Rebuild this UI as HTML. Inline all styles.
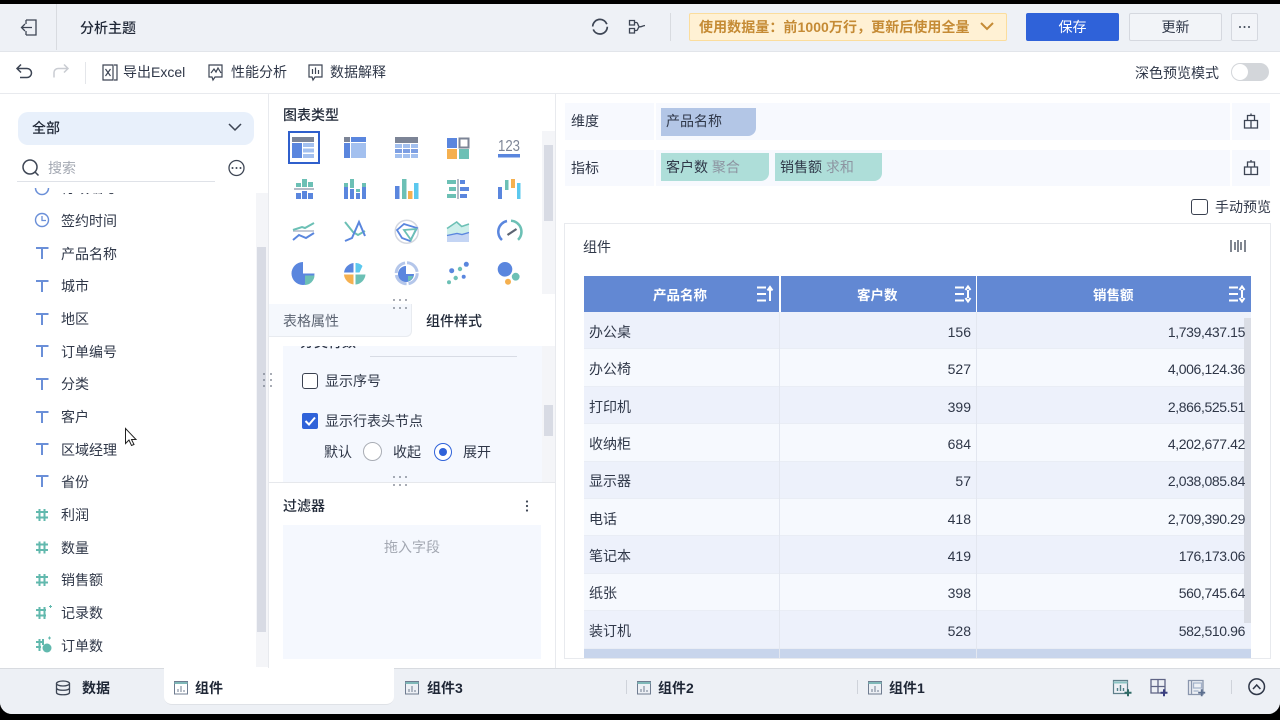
<!DOCTYPE html>
<html><head><meta charset="utf-8"><style>
*{box-sizing:border-box}
html,body{margin:0;padding:0}
body{width:1280px;height:720px;overflow:hidden;position:relative;background:#000;font:14px/20px "Liberation Sans","Noto Sans CJK SC",sans-serif;color:#2f3748}
.a{position:absolute}
.t{position:absolute;white-space:nowrap;height:20px;line-height:20px}
.b{font-weight:700}
.g{color:#8d94a1}
.r{text-align:right}
.row{position:absolute;left:584px;width:667px;height:37.4px;border-bottom:1px solid #e9edf5}
.c{position:absolute;top:0;bottom:0;width:1px;background:#e3e7f0}
svg{position:absolute;left:0;top:0;pointer-events:none}
</style></head><body>
<div class="a" style="left:0;top:4px;width:1280px;height:710px;background:#fff;border-radius:0 0 12px 12px;overflow:hidden">
<div class="a" style="left:0;top:0;width:1280px;height:48px;background:#eef1f6;border-bottom:1px solid #e2e5ea"></div>
<div class="a" style="left:0;top:89px;width:1280px;height:1px;background:#e8eaee"></div>
<div class="a" style="left:0;top:664px;width:1280px;height:46px;background:#edf0f5;border-top:1px solid #d8dbe0"></div>
</div>
<div class="a" style="left:56px;top:4px;width:1px;height:46px;background:#d8dbe0"></div>
<div class="t b" style="left:80px;top:18px;color:#1f2736;font-weight:500">分析主题</div>
<div class="a" style="left:670px;top:13px;width:1px;height:28px;background:#d8dbe0"></div>
<div class="a" style="left:689px;top:13px;width:318px;height:28px;background:#fff1d4;border:1px solid #fbdd9d;border-radius:2px"></div>
<div class="t b" style="left:699px;top:17px;color:#c58b35;letter-spacing:.07px;font-size:14px">使用数据量：前1000万行，更新后使用全量</div>
<div class="a" style="left:1026px;top:13px;width:93px;height:28px;background:#2f62d9;border-radius:2px;color:#fff;text-align:center;line-height:28px">保存</div>
<div class="a" style="left:1129px;top:13px;width:93px;height:28px;background:#f2f4f8;border:1px solid #d5d8df;border-radius:2px;text-align:center;line-height:26px">更新</div>
<div class="a" style="left:1231px;top:13px;width:27px;height:28px;background:#f2f4f8;border:1px solid #d5d8df;border-radius:2px"></div>
<div class="a" style="left:85px;top:62px;width:1px;height:22px;background:#e4e6ea"></div>
<div class="t" style="left:123px;top:62px">导出Excel</div>
<div class="t" style="left:231px;top:62px">性能分析</div>
<div class="t" style="left:330px;top:62px">数据解释</div>
<div class="t" style="left:1135px;top:63px">深色预览模式</div>
<div class="a" style="left:1231px;top:63px;width:38px;height:18px;border-radius:9px;background:#d3d6da"></div>
<div class="a" style="left:1232px;top:64px;width:16px;height:16px;border-radius:8px;background:#fff"></div>
<div class="a" style="left:268px;top:94px;width:1px;height:574px;background:#e8eaee"></div>
<div class="a" style="left:555px;top:94px;width:1px;height:574px;background:#e8eaee"></div>
<div class="a" style="left:18px;top:112px;width:236px;height:33px;background:#e8f0fb;border-radius:10px"></div>
<div class="t b" style="left:32px;top:118px;color:#1f2736;font-weight:500">全部</div>
<div class="t g" style="left:48px;top:158px;color:#a3a8b2">搜索</div>
<div class="a" style="left:17px;top:181px;width:198px;height:1px;background:#dfe2e8"></div>
<div class="a" style="left:0;top:193px;width:250px;height:470px;overflow:hidden">
<div class="t" style="left:61px;top:-15px">行政编号</div>
<div class="t" style="left:61px;top:18px">签约时间</div>
<div class="t" style="left:61px;top:50.5px">产品名称</div>
<div class="t" style="left:61px;top:83px">城市</div>
<div class="t" style="left:61px;top:116px">地区</div>
<div class="t" style="left:61px;top:148.5px">订单编号</div>
<div class="t" style="left:61px;top:181px">分类</div>
<div class="t" style="left:61px;top:214px">客户</div>
<div class="t" style="left:61px;top:246.5px">区域经理</div>
<div class="t" style="left:61px;top:279px">省份</div>
<div class="t" style="left:61px;top:312px">利润</div>
<div class="t" style="left:61px;top:344.5px">数量</div>
<div class="t" style="left:61px;top:377px">销售额</div>
<div class="t" style="left:61px;top:410px">记录数</div>
<div class="t" style="left:61px;top:442.5px">订单数</div>
</div>
<div class="a" style="left:256px;top:193px;width:12px;height:474px;background:#f4f5f8"></div>
<div class="a" style="left:257px;top:247px;width:9px;height:385px;background:#d8dbe4"></div>
<div class="t b" style="left:283px;top:105px;color:#1f2736;font-weight:500">图表类型</div>
<div class="a" style="left:288px;top:131px;width:32px;height:33px;border:2px solid #2f5fcc"></div>
<div class="a" style="left:542px;top:131px;width:13px;height:163px;background:#f4f5f8"></div>
<div class="a" style="left:544px;top:145px;width:9px;height:76px;background:#d8dbe4"></div>
<div class="a" style="left:269px;top:304px;width:143px;height:33px;background:#f5f8fd;border-right:1px solid #e8ebf0;border-bottom:1px solid #e8ebf0;border-radius:0 0 6px 0"></div>
<div class="t" style="left:283px;top:311px;color:#5c6472">表格属性</div>
<div class="t b" style="left:426px;top:311px;color:#1f2736;font-weight:500">组件样式</div>
<div class="a" style="left:283px;top:346px;width:259px;height:136px;background:#f5f8fe;overflow:hidden">
<div class="t" style="left:17px;top:-14px;font-weight:500">分类行数</div>
<div class="a" style="left:87px;top:10px;width:147px;height:1px;background:#d8dce5"></div>
<div class="t" style="left:42px;top:25px">显示序号</div>
<div class="t" style="left:42px;top:65px">显示行表头节点</div>
<div class="t" style="left:41px;top:96px">默认</div>
<div class="t" style="left:110px;top:96px">收起</div>
<div class="t" style="left:180px;top:96px">展开</div>
</div>
<div class="a" style="left:542px;top:346px;width:13px;height:136px;background:#f4f5f8"></div>
<div class="a" style="left:544px;top:405px;width:9px;height:31px;background:#d8dbe4"></div>
<div class="a" style="left:302px;top:373px;width:16px;height:16px;border:1.5px solid #3a4150;border-radius:3px;background:#fff"></div>
<div class="a" style="left:302px;top:413px;width:16px;height:16px;border-radius:2px;background:#2f62d9"></div>
<div class="a" style="left:363px;top:442px;width:19px;height:19px;border:1px solid #a9adb5;border-radius:50%;background:#fff"></div>
<div class="a" style="left:434px;top:443px;width:18px;height:18px;border:1px solid #2f62d9;border-radius:50%;background:#fff"></div>
<div class="a" style="left:439px;top:448px;width:8px;height:8px;border-radius:50%;background:#2f62d9"></div>
<div class="a" style="left:269px;top:482px;width:286px;height:1px;background:#e6e8ec"></div>
<div class="t b" style="left:283px;top:496px;color:#1f2736;font-weight:500">过滤器</div>
<div class="a" style="left:283px;top:525px;width:258px;height:134px;background:#f5f8fe"></div>
<div class="t" style="left:384px;top:537px;color:#a3a8b2">拖入字段</div>
<div class="a" style="left:565px;top:103px;width:705px;height:37px;background:#f7f9fe"></div>
<div class="a" style="left:565px;top:150px;width:705px;height:36px;background:#f7f9fe"></div>
<div class="a" style="left:654px;top:103px;width:2px;height:37px;background:#fff"></div>
<div class="a" style="left:654px;top:150px;width:2px;height:36px;background:#fff"></div>
<div class="a" style="left:1230px;top:103px;width:2px;height:37px;background:#fff"></div>
<div class="a" style="left:1230px;top:150px;width:2px;height:36px;background:#fff"></div>
<div class="t" style="left:571px;top:111px">维度</div>
<div class="t" style="left:571px;top:158px">指标</div>
<div class="a" style="left:661px;top:108px;width:95px;height:28px;background:#b3c6e6;border-radius:0 0 8px 0"></div>
<div class="t" style="left:666px;top:111px">产品名称</div>
<div class="a" style="left:661px;top:153px;width:108px;height:28px;background:#aeded9;border-radius:0 0 8px 0"></div>
<div class="t" style="left:666px;top:157px">客户数 <span class="g">聚合</span></div>
<div class="a" style="left:775px;top:153px;width:107px;height:28px;background:#aeded9;border-radius:0 0 8px 0"></div>
<div class="t" style="left:780px;top:157px">销售额 <span class="g">求和</span></div>
<div class="a" style="left:1191px;top:199px;width:17px;height:16px;border:1.5px solid #3a4150;border-radius:3px"></div>
<div class="t" style="left:1215px;top:197px">手动预览</div>
<div class="a" style="left:564px;top:223px;width:707px;height:436px;border:1px solid #e8eaee"></div>
<div class="t" style="left:583px;top:237px">组件</div>
<div class="a" style="left:584px;top:276px;width:667px;height:36px;background:#6288d3"></div>
<div class="a" style="left:779px;top:276px;width:2px;height:36px;background:#fff"></div>
<div class="a" style="left:976px;top:276px;width:1px;height:36px;background:#fff"></div>
<div class="t b" style="left:653px;top:286px;color:#fff;font-size:13.5px">产品名称</div>
<div class="t b" style="left:857px;top:286px;color:#fff;font-size:13.5px">客户数</div>
<div class="t b" style="left:1093px;top:286px;color:#fff;font-size:13.5px">销售额</div>
<div class="row" style="top:312px;background:#edf1fb"></div>
<div class="row" style="top:349.4px;background:#f6f9fe"></div>
<div class="row" style="top:386.8px;background:#edf1fb"></div>
<div class="row" style="top:424.2px;background:#f6f9fe"></div>
<div class="row" style="top:461.6px;background:#edf1fb"></div>
<div class="row" style="top:499px;background:#f6f9fe"></div>
<div class="row" style="top:536.4px;background:#edf1fb"></div>
<div class="row" style="top:573.8px;background:#f6f9fe"></div>
<div class="row" style="top:611.2px;background:#edf1fb"></div>
<div class="a" style="left:584px;top:649px;width:667px;height:9px;background:#c8d5ec"></div>
<div class="c" style="left:779px;top:312px;bottom:62px"></div>
<div class="c" style="left:976px;top:312px;bottom:62px"></div>
<div class="a" style="left:1244px;top:318px;width:7px;height:305px;background:#dadde5"></div>
<div class="t" style="left:589px;top:322px">办公桌</div><div class="t r" style="right:309px;top:322px">156</div><div class="t r" style="right:35px;top:322px;letter-spacing:-.38px">1,739,437.15</div>
<div class="t" style="left:589px;top:359px">办公椅</div><div class="t r" style="right:309px;top:359px">527</div><div class="t r" style="right:35px;top:359px;letter-spacing:-.38px">4,006,124.36</div>
<div class="t" style="left:589px;top:397px">打印机</div><div class="t r" style="right:309px;top:397px">399</div><div class="t r" style="right:35px;top:397px;letter-spacing:-.38px">2,866,525.51</div>
<div class="t" style="left:589px;top:434px">收纳柜</div><div class="t r" style="right:309px;top:434px">684</div><div class="t r" style="right:35px;top:434px;letter-spacing:-.38px">4,202,677.42</div>
<div class="t" style="left:589px;top:471px">显示器</div><div class="t r" style="right:309px;top:471px">57</div><div class="t r" style="right:35px;top:471px;letter-spacing:-.38px">2,038,085.84</div>
<div class="t" style="left:589px;top:509px">电话</div><div class="t r" style="right:309px;top:509px">418</div><div class="t r" style="right:35px;top:509px;letter-spacing:-.38px">2,709,390.29</div>
<div class="t" style="left:589px;top:546px">笔记本</div><div class="t r" style="right:309px;top:546px">419</div><div class="t r" style="right:35px;top:546px;letter-spacing:-.38px">176,173.06</div>
<div class="t" style="left:589px;top:583px">纸张</div><div class="t r" style="right:309px;top:583px">398</div><div class="t r" style="right:35px;top:583px;letter-spacing:-.38px">560,745.64</div>
<div class="t" style="left:589px;top:621px">装订机</div><div class="t r" style="right:309px;top:621px">528</div><div class="t r" style="right:35px;top:621px;letter-spacing:-.38px">582,510.96</div>
<div class="a" style="left:164px;top:668px;width:230px;height:37px;background:#fff;border-bottom:1px solid #dfe2e7;border-radius:0 0 8px 8px"></div>
<div class="t b" style="left:82px;top:678px;color:#1f2736">数据</div>
<div class="t b" style="left:195px;top:678px;color:#1f2736">组件</div>
<div class="t b" style="left:427px;top:678px;color:#1f2736">组件3</div>
<div class="t b" style="left:658px;top:678px;color:#1f2736">组件2</div>
<div class="t b" style="left:889px;top:678px;color:#1f2736">组件1</div>
<div class="a" style="left:626px;top:680px;width:1px;height:14px;background:#cfd3da"></div>
<div class="a" style="left:857px;top:680px;width:1px;height:14px;background:#cfd3da"></div>
<div class="a" style="left:1231px;top:680px;width:1px;height:14px;background:#cfd3da"></div>
<svg width="1280" height="720" viewBox="0 0 1280 720" fill="none">
<g stroke="#3d4554" stroke-width="1.3">
<path d="M26 20h10v15H26M26 20v4M26 31v4M32 27.500H21.500M25 24l-3.500 3.500 3.500 3.500"/>
<circle cx="600" cy="26.700" r="7.300" stroke-width="1.700" stroke-dasharray="20 3 20 3"/>
<path d="M629.500 20.500h5v4.500h-5zM629.500 28.500h5v4.500h-5zM634.500 22.500h2c1.500 0 1.500 4 3 4.300 2 .3 3-1 5.500-1.300M634.500 30.500h2c1.500 0 1.500-3.700 3-3.700"/>
<path d="M18 68.500h9a4.500 4.500 0 0 1 0 9h-7M21 64.500l-4 4 4 4" stroke-width="1.500"/>
<path d="M67 68.500h-9a4 4 0 0 0-4 4v5M64 64.500l4 4-4 4" stroke="#c9ccd2" stroke-width="1.500"/>
<path d="M103 65h10v15h-10zM105.500 69l5 7M110.500 69l-5 7M114 65h3v15h-3" stroke-width="1.200"/>
<path d="M209 65h13v12h-7l-2 3-1-3h-3zM211 73l3-4 2 3 2-4 3 5" stroke-width="1.200"/>
<path d="M309 65h13v12h-7l-2 3-1-3h-3zM312.500 69v5M315.500 67.500v6.500M318.500 70v4" stroke-width="1.200"/>
<circle cx="30" cy="167" r="7" stroke-width="1.500"/><path d="M35 172l3.500 3.500" stroke-width="1.500"/>
<circle cx="236.500" cy="168" r="7.500"/>
<path d="M1244.500 120.500h13v7.500h-13zM1247.500 120.500v-5h7v5M1251 115.500v-2M1251 120.500v7.500"/>
<path d="M1244.500 167h13v7.500h-13zM1247.500 167v-5h7v5M1251 162v-2M1251 167v7.500"/>
<path d="M1231 240v12M1245 240v12M1235 242v8M1238 240v12M1241 242v8"/>
</g>
<path d="M981 23l6 6 6-6" stroke="#c58b35" stroke-width="2"/>
<path d="M229 124l6 6 6-6" stroke="#3d4554" stroke-width="1.500"/>
<g fill="#3d4554"><circle cx="232.500" cy="168" r="1"/><circle cx="236.500" cy="168" r="1"/><circle cx="240.500" cy="168" r="1"/>
<circle cx="1240" cy="27" r="1"/><circle cx="1244.500" cy="27" r="1"/><circle cx="1249" cy="27" r="1"/>
<circle cx="527" cy="501.500" r="1.100"/><circle cx="527" cy="506" r="1.100"/><circle cx="527" cy="510.500" r="1.100"/></g>
<g fill="#6b7280"><circle cx="394" cy="300" r=".9"/><circle cx="400" cy="300" r=".9"/><circle cx="406" cy="300" r=".9"/><circle cx="394" cy="308" r=".9"/><circle cx="400" cy="308" r=".9"/><circle cx="406" cy="308" r=".9"/>
<circle cx="394" cy="477" r=".9"/><circle cx="400" cy="477" r=".9"/><circle cx="406" cy="477" r=".9"/><circle cx="394" cy="485" r=".9"/><circle cx="400" cy="485" r=".9"/><circle cx="406" cy="485" r=".9"/>
<circle cx="264" cy="374" r=".9"/><circle cx="264" cy="380" r=".9"/><circle cx="264" cy="386" r=".9"/><circle cx="271" cy="374" r=".9"/><circle cx="271" cy="380" r=".9"/><circle cx="271" cy="386" r=".9"/></g>
<path d="M305.500 421l3.500 3.500 6-7" stroke="#fff" stroke-width="2"/>
<path d="M35.500 188a6.500 6.500 0 0 0 13 0" stroke="#6a8fd8" stroke-width="1.500"/>
<circle cx="42" cy="220" r="6.500" stroke="#6a8fd8" stroke-width="1.400"/><path d="M42 216v4.500h4" stroke="#6a8fd8" stroke-width="1.300"/>
<g stroke="#6a8fd8" stroke-width="2">
<path d="M36 248h12.500M42 248v11M36 281h12.500M42 281v11M36 314h12.500M42 314v11M36 346h12.500M42 346v11M36 379h12.500M42 379v11M36 412h12.500M42 412v11M36 444h12.500M42 444v11M36 476h12.500M42 476v11"/></g>
<g stroke="#62b9ae" stroke-width="2">
<path d="M36 512h12M36 517.500h12M39.500 509v12M44.500 509v12M36 544.500h12M36 550h12M39.500 541.500v12M44.500 541.500v12M36 577h12M36 582.500h12M39.500 574v12M44.500 574v12M36 610h10M36 615.500h10M39.500 607v12M44.500 607v12M36 642h7M36 647h5M39.500 639v12M43 639v6"/></g>
<circle cx="47" cy="648" r="4.500" fill="#62b9ae"/><path d="M49 606.500h3M50.500 605v3M48 638h3M49.500 636.500v3" stroke="#62b9ae"/>
<g fill="#5a86de">
<rect x="292" y="137" width="22" height="5" fill="#7c8496"/><rect x="292" y="143" width="10" height="15"/><rect x="303" y="143" width="11" height="4" fill="#a3c0ef"/><rect x="303" y="148.500" width="11" height="4" fill="#a3c0ef"/><rect x="303" y="154" width="11" height="4" fill="#a3c0ef"/>
<rect x="344" y="137" width="6" height="5" fill="#7c8496"/><rect x="351" y="137" width="15" height="5"/><rect x="344" y="143" width="6" height="15"/><rect x="351" y="143" width="15" height="15" fill="#a3c0ef"/>
<rect x="395" y="137" width="23" height="6" fill="#7c8496"/><g fill="#a3c0ef"><rect x="395" y="144" width="7" height="4"/><rect x="403" y="144" width="7" height="4"/><rect x="411" y="144" width="7" height="4"/><rect x="395" y="149" width="7" height="4" fill="#7d9fe3"/><rect x="403" y="149" width="7" height="4" fill="#7d9fe3"/><rect x="411" y="149" width="7" height="4" fill="#7d9fe3"/><rect x="395" y="154" width="7" height="4"/><rect x="403" y="154" width="7" height="4"/><rect x="411" y="154" width="7" height="4"/></g>
<rect x="447" y="138" width="10" height="10"/><rect x="459.500" y="138.500" width="9" height="9" fill="none" stroke="#7c8496" stroke-width="2"/><rect x="447" y="149" width="10" height="10" fill="#f5b04f"/><rect x="459" y="149" width="10" height="10" fill="#6cc0b5"/>
<rect x="498" y="154" width="22" height="3.500"/>
<rect x="294" y="188" width="20" height="2" fill="#b4bac6"/>
<rect x="296" y="183" width="5" height="4" fill="#6cc0b5"/><rect x="302" y="179" width="5" height="8" fill="#6cc0b5"/><rect x="308" y="182" width="5" height="5" fill="#6cc0b5"/><rect x="296" y="193" width="5" height="6"/><rect x="302" y="191" width="5" height="8"/><rect x="308" y="193" width="5" height="6"/>
<rect x="344" y="187" width="4" height="12"/><rect x="344" y="183" width="4" height="4" fill="#6cc0b5"/><rect x="350" y="189" width="4" height="10"/><rect x="350" y="179" width="4" height="9" fill="#6cc0b5"/><rect x="356" y="193" width="4" height="6"/><rect x="356" y="189" width="4" height="3" fill="#6cc0b5"/><rect x="362" y="187" width="4" height="12"/><rect x="362" y="183" width="4" height="4" fill="#6cc0b5"/>
<rect x="395" y="186" width="4.500" height="13"/><rect x="402" y="179" width="4.500" height="20" fill="#6cc0b5"/><rect x="408" y="191" width="4.500" height="8" fill="#f5b04f"/><rect x="414" y="183" width="4.500" height="16" fill="#5bc8ee"/>
<rect x="447" y="180" width="9" height="4" fill="#6cc0b5"/><rect x="460" y="180" width="5" height="4"/><rect x="449" y="187" width="7" height="4" fill="#6cc0b5"/><rect x="460" y="187" width="9" height="4"/><rect x="447" y="194" width="9" height="4" fill="#6cc0b5"/><rect x="460" y="194" width="7" height="4"/><rect x="457" y="179" width="2" height="20" fill="#b4bac6"/>
<rect x="498" y="187" width="4" height="12"/><rect x="505" y="180" width="3.500" height="10" fill="#6cc0b5"/><rect x="511" y="179" width="4" height="9" fill="#f5b04f"/><rect x="517" y="183" width="3.500" height="16" fill="#5bc8ee"/>
</g>
<g stroke-width="2" fill="none">
<path d="M293 231h21" stroke="#c4cad6" stroke-width="2"/>
<path d="M293 230l9-3 3 1 9-5" stroke="#6cc0b5"/><path d="M293 240l6-5 7 3 8-5" stroke="#5a86de"/>
<path d="M345 222l8 10 5 3 7-4" stroke="#6cc0b5"/><path d="M345 241l7-3 7-16 6 14" stroke="#5a86de"/>
<circle cx="406.700" cy="231.700" r="11.500" stroke="#d3d7e0" stroke-width="1.500"/><path d="M397 230l7-6 13 4-7 13-8-3z" stroke="#5a86de" stroke-width="1.800"/><path d="M404 230l12-1-5 11z" stroke="#6cc0b5" stroke-width="1.800"/>
<path d="M447 229l10-6 5 4 7-3v8l-7 2-5-1-10 2z" fill="#cdeeea" stroke="none"/><path d="M447 236l10-2 5 1 7-2v9h-22z" fill="#c4d5f4" stroke="none"/><path d="M447 228.500l9.700-6.500 5 4.500 7.300-2.500" stroke="#6cc0b5" stroke-width="1.600"/><path d="M447 235.500l10-2 5 1 7-2" stroke="#5a86de" stroke-width="1.400"/>
<path d="M502 240a11 11 0 0 1 5-19" stroke="#5a86de" stroke-width="2.500"/><path d="M511 220.800a11 11 0 0 1 7 19" stroke="#6cc0b5" stroke-width="2.500"/><path d="M507.500 235l9-6" stroke="#5c6472" stroke-width="2.200"/>
<circle cx="406.700" cy="273.300" r="10.500" stroke="#b4c6ea" stroke-width="3" stroke-dasharray="14.500 2"/>
</g>
<path d="M303 262a11.500 11.500 0 1 0 11.500 11.500H303z" fill="#5a86de"/><path d="M305 275.500h9.500a10 10 0 0 1-9.500 9.500z" fill="#6cc0b5"/>
<path d="M353.500 263a11 11 0 0 0-9.500 9.500h9.500z" fill="#5a86de"/><path d="M355.500 263c3 0 5 1 7 3l-3 6.500h-4z" fill="#5bc8ee"/><path d="M344 274.500h9.500v10a11 11 0 0 1-9.500-10z" fill="#f5b04f"/><path d="M355.500 274.500h10a11 11 0 0 1-10 10z" fill="#6cc0b5"/>
<path d="M406 266a8 8 0 1 0 8 8h-8z" fill="#5a86de"/><path d="M408 276h5a6 6 0 0 1-5 5z" fill="#6cc0b5"/>
<g fill="#5a86de"><circle cx="451.700" cy="270.700" r="2.500"/><circle cx="466.300" cy="264.300" r="2.500"/><circle cx="463.700" cy="276.700" r="2"/></g><g fill="#6cc0b5"><circle cx="460" cy="269" r="2.200"/><circle cx="455.700" cy="278" r="2.200"/><circle cx="449" cy="282.300" r="2"/></g>
<circle cx="505" cy="269.300" r="7.300" fill="#5a86de"/><circle cx="515.700" cy="276.700" r="3.900" fill="#6cc0b5"/><circle cx="508" cy="281.700" r="3" fill="#f5b04f"/>
<text x="498" y="151" font-family="Liberation Sans" font-size="16" fill="#7c8496" textLength="22" lengthAdjust="spacingAndGlyphs">123</text>
<g stroke="#fff"><path d="M757 287.500h9M757 294h9M757 300.500h9M770 301v-13M767.500 290.500l2.500-3.500 2.500 3.500" stroke-width="2"/>
<path d="M955 287.500h9M955 294h9M955 300.500h9M968 290v8M965.500 290l2.500-3.500 2.500 3.500M965.500 298l2.500 3.500 2.500-3.500" stroke-width="2"/>
<path d="M1229 287.500h9M1229 294h9M1229 300.500h9M1242 290v8M1239.500 290l2.500-3.500 2.500 3.500M1239.500 298l2.500 3.500 2.500-3.500" stroke-width="2"/></g>
<path d="M125.500 428.500v15l3.500-3.500 2.500 5.500 2.500-1-2.500-5h4.500z" fill="#fff" stroke="#222" stroke-width="1"/>
<g stroke="#3d4554" stroke-width="1.300"><ellipse cx="63" cy="683.500" rx="6.500" ry="2.500"/><path d="M56.500 683.500v9c0 3 13 3 13 0v-9M56.500 688c0 3 13 3 13 0"/></g>
<g stroke="#6f7c90"><path d="M174.500 681.500h13v12.500h-13z"/><path d="M174.500 683h13" stroke="#7fb8b8" stroke-width="2"/><path d="M178 692v-3M181 692v-6M184 692v-2"/>
<path d="M405.500 681.500h13v12.500h-13z"/><path d="M405.500 683h13" stroke="#7fb8b8" stroke-width="2"/><path d="M409 692v-3M412 692v-6M415 692v-2"/>
<path d="M637.500 681.500h13v12.500h-13z"/><path d="M637.500 683h13" stroke="#7fb8b8" stroke-width="2"/><path d="M641 692v-3M644 692v-6M647 692v-2"/>
<path d="M868.500 681.500h13v12.500h-13z"/><path d="M868.500 683h13" stroke="#7fb8b8" stroke-width="2"/><path d="M872 692v-3M875 692v-6M878 692v-2"/></g>
<path d="M1113.500 680.500h14v13h-14z" stroke="#5e7f8a" stroke-width="1.200"/><path d="M1113.500 682.500h14" stroke="#8cc4c4" stroke-width="2"/><path d="M1117.500 691v-3M1120.500 691v-6M1123.500 691v-3" stroke="#4f7f88" stroke-width="1.400"/><path d="M1124.500 692.700h7M1128 689.200v7" stroke="#2f6b66" stroke-width="2"/>
<path d="M1151 679.500h14v13.500h-14zM1158 679.500v13.500M1151 686.500h14" stroke="#5f6485" stroke-width="1.300"/><path d="M1160.500 692.700h7M1164 689.200v7" stroke="#3a3f80" stroke-width="2"/>
<path d="M1188.500 680.500h14.500v14h-14.500zM1191.500 680.500v14" stroke="#8a96ad" stroke-width="1.300"/><path d="M1193.500 683h8v5h-8zM1193.500 691h5" stroke="#a4b2ca" stroke-width="1.300"/><path d="M1198.200 692.700h7M1201.700 689.200v7" stroke="#5c6f8f" stroke-width="1.800"/>
<circle cx="1256.700" cy="686.700" r="7.800" stroke="#2f3748" stroke-width="1.500"/><path d="M1253 689l3.700-4 3.700 4" stroke="#2f3748" stroke-width="1.500"/>
</svg>
</body></html>
